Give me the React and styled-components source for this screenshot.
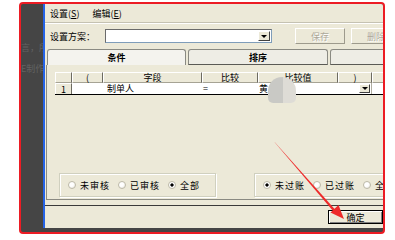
import React from 'react'
import styled, { createGlobalStyle } from 'styled-components'

const GlobalStyle = createGlobalStyle`
  body {
    margin: 0;
    background: #ffffff;
    font-family: "Noto Sans CJK SC", "DejaVu Sans", sans-serif;
  }
`

const Page = styled.div`
  position: relative;
  width: 395px;
  height: 240px;
  padding: 2px 0 0 19px;
  box-sizing: border-box;
  overflow: hidden;
`

const Frame = styled.div`
  width: 366px;
  height: 232px;
  box-sizing: border-box;
  border: 2px solid #ec1c24;
  border-radius: 4px;
  background: #454545;
  display: flex;
  overflow: hidden;
`

const LeftStrip = styled.div`
  width: 22px;
  flex-shrink: 0;
  padding-top: 38px;
  display: flex;
  flex-direction: column;
  gap: 10px;
  overflow: hidden;
`

const GhostText = styled.div`
  font-size: 9px;
  line-height: 11px;
  color: #626262;
  white-space: nowrap;
`

const Window = styled.div`
  width: 340px;
  height: 224px;
  flex-shrink: 0;
  box-sizing: border-box;
  border-left: 2px solid #2563e6;
  background: #ece9d8;
  display: flex;
  flex-direction: column;
  overflow: hidden;
  font-size: 9px;
  color: #000;
`

const MenuBar = styled.div`
  height: 18px;
  display: flex;
  align-items: center;
  padding-left: 5px;
  gap: 13px;
`

const MenuSep = styled.div`
  height: 0;
  border-top: 1px solid #c5c2b2;
  border-bottom: 1px solid #ffffff;
`

const Toolbar = styled.div`
  height: 24px;
  display: flex;
  align-items: center;
  padding-left: 5px;
  white-space: nowrap;
`

const Label = styled.span`
  width: 55px;
  flex-shrink: 0;
`

const Combo = styled.div`
  width: 167px;
  height: 14px;
  flex-shrink: 0;
  box-sizing: border-box;
  border: 1px solid #7f9db9;
  border-top-color: #6b6b6b;
  border-left-color: #6b6b6b;
  background: #fff;
  display: flex;
  justify-content: flex-end;
  padding: 1px;
`

const DropBtn = styled.div`
  width: ${p => p.$w || 12}px;
  height: ${p => p.$h || 10}px;
  box-sizing: border-box;
  background: #ece9d8;
  border: 1px solid;
  border-color: #fff #404040 #404040 #fff;
  display: flex;
  align-items: center;
  justify-content: center;
  &::after {
    content: '';
    border-left: 3px solid transparent;
    border-right: 3px solid transparent;
    border-top: 3px solid #000;
  }
`

const ToolButton = styled.div`
  width: 50px;
  height: 16px;
  flex-shrink: 0;
  margin-left: ${p => p.$gap}px;
  box-sizing: border-box;
  border: 1px solid;
  border-color: #fff #9d9a8c #9d9a8c #fff;
  display: flex;
  align-items: center;
  justify-content: center;
  color: #aca899;
  text-shadow: 1px 1px 0 #fff;
`

const TabStrip = styled.div`
  height: 16px;
  display: flex;
  padding-left: 2px;
  margin-top: 1px;
  gap: 2px;
  white-space: nowrap;
  overflow: hidden;
`

const Tab = styled.div`
  width: ${p => p.$w}px;
  flex-shrink: 0;
  box-sizing: border-box;
  border: 1px solid #8a8a82;
  border-bottom: ${p => (p.$active ? 'none' : '1px solid #5a5a55')};
  border-radius: 3px 3px 0 0;
  background: ${p => (p.$active ? '#f4f3ee' : '#eeede5')};
  display: flex;
  align-items: center;
  justify-content: center;
  font-weight: bold;
  height: 16px;
`

const Panel = styled.div`
  margin-left: 1px;
  height: 135px;
  box-sizing: border-box;
  border-left: 1px solid #8a8a82;
  border-bottom: 1px solid #8a8a82;
  background: #ece9d8;
  display: flex;
  flex-direction: column;
  padding: 7px 0 0 8px;
`

const Grid = styled.div`
  display: grid;
  grid-template-columns: 17px 31px 99px 56px 80px 34px 48px;
  grid-template-rows: 11px 11px;
  border-bottom: 1px solid #000;
  width: max-content;
`

const HeadCell = styled.div`
  box-sizing: border-box;
  background: #ece9d8;
  border-top: 1px solid #fff;
  border-right: 1px solid #6d6b60;
  border-left: 1px solid #fff;
  border-bottom: 1px solid #a6a394;
  display: flex;
  align-items: center;
  justify-content: center;
  line-height: 9px;
  font-size: 9px;
`

const RowHead = styled(HeadCell)`
  justify-content: flex-start;
  padding-left: 5px;
  border-bottom: none;
`

const Cell = styled.div`
  box-sizing: border-box;
  background: #fff;
  display: flex;
  align-items: center;
  justify-content: ${p => (p.$end ? 'flex-end' : 'flex-start')};
  padding: 0 ${p => (p.$end ? 1 : 0)}px 0 ${p => p.$pad || 1}px;
  border-right: ${p => (p.$line ? '1px solid #b0ad9f' : 'none')};
  line-height: 9px;
  font-size: 9px;
`

const Spacer = styled.div`
  flex: 1;
`

const GroupRow = styled.div`
  display: flex;
  gap: 38px;
  margin: 0 0 2px 4px;
  white-space: nowrap;
`

const GroupBox = styled.div`
  width: ${p => p.$w}px;
  height: 24px;
  flex-shrink: 0;
  box-sizing: border-box;
  border: 1px solid #d0d0bf;
  box-shadow: inset 1px 1px 0 #fff, 1px 1px 0 #fff;
  display: flex;
  align-items: center;
  padding-left: 8px;
  gap: 8px;
`

const Radio = styled.span`
  display: inline-flex;
  align-items: center;
  gap: 4px;
  letter-spacing: 1px;
  &::before {
    content: '';
    width: 8px;
    height: 8px;
    flex-shrink: 0;
    box-sizing: border-box;
    border-radius: 50%;
    border: 1px solid #bdbaa9;
    background: ${p =>
      p.$on
        ? 'radial-gradient(circle, #000 0 1.4px, #fff 1.8px)'
        : 'radial-gradient(circle at 35% 35%, #fff 0 40%, #e4e2d8 100%)'};
  }
`

const Footer = styled.div`
  margin-top: 5px;
  border-top: 1px solid #3a3a3a;
  flex: 1;
  display: flex;
  justify-content: flex-end;
  align-items: flex-start;
  padding-top: 4px;
`

const OkButton = styled.div`
  width: 55px;
  height: 14px;
  box-sizing: border-box;
  border: 1px solid #000;
  box-shadow: inset 1px 1px 0 #fff, inset -1px -1px 0 #808080;
  display: flex;
  align-items: center;
  justify-content: center;
`

const Blur = styled.div`
  position: absolute;
  left: 268px;
  top: 77px;
  width: 28px;
  height: 26px;
  border-radius: 14px 14px 5px 5px;
  background: linear-gradient(90deg, #c9c9c5 0 55%, #dedcd6 55%);
  filter: blur(0.6px);
`

const ArrowLayer = styled.svg`
  position: absolute;
  left: 0;
  top: 0;
  pointer-events: none;
`

export default function App() {
  return (
    <Page>
      <GlobalStyle />
      <Frame>
        <LeftStrip>
          <GhostText>言，所</GhostText>
          <GhostText>E制作</GhostText>
        </LeftStrip>
        <Window>
          <MenuBar>
            <span>设置(<u>S</u>)</span>
            <span>编辑(<u>E</u>)</span>
          </MenuBar>
          <MenuSep />
          <Toolbar>
            <Label>设置方案：</Label>
            <Combo>
              <DropBtn />
            </Combo>
            <ToolButton $gap={23}>保存</ToolButton>
            <ToolButton $gap={6}>删除</ToolButton>
          </Toolbar>
          <TabStrip>
            <Tab $w={139} $active>条件</Tab>
            <Tab $w={140}>排序</Tab>
            <Tab $w={140} />
          </TabStrip>
          <Panel>
            <Grid>
              <HeadCell />
              <HeadCell>(</HeadCell>
              <HeadCell>字段</HeadCell>
              <HeadCell>比较</HeadCell>
              <HeadCell>比较值</HeadCell>
              <HeadCell>)</HeadCell>
              <HeadCell>关系</HeadCell>
              <RowHead>1</RowHead>
              <Cell />
              <Cell $pad={4}>制单人</Cell>
              <Cell>=</Cell>
              <Cell>黄</Cell>
              <Cell $end $line>
                <DropBtn $w={11} $h={9} />
              </Cell>
              <Cell />
            </Grid>
            <Spacer />
            <GroupRow>
              <GroupBox $w={157}>
                <Radio>未审核</Radio>
                <Radio>已审核</Radio>
                <Radio $on>全部</Radio>
              </GroupBox>
              <GroupBox $w={160}>
                <Radio $on>未过账</Radio>
                <Radio>已过账</Radio>
                <Radio>全部</Radio>
              </GroupBox>
            </GroupRow>
          </Panel>
          <Footer>
            <OkButton>确定</OkButton>
          </Footer>
        </Window>
      </Frame>
      <Blur />
      <ArrowLayer width="395" height="240" viewBox="0 0 395 240">
        <polygon points="274,141.5 275,142.5 335.5,210 333.5,211.5" fill="#ee2a2a" />
        <polygon points="344,219 330.5,212.5 338.5,205" fill="#ee2a2a" />
      </ArrowLayer>
    </Page>
  )
}
